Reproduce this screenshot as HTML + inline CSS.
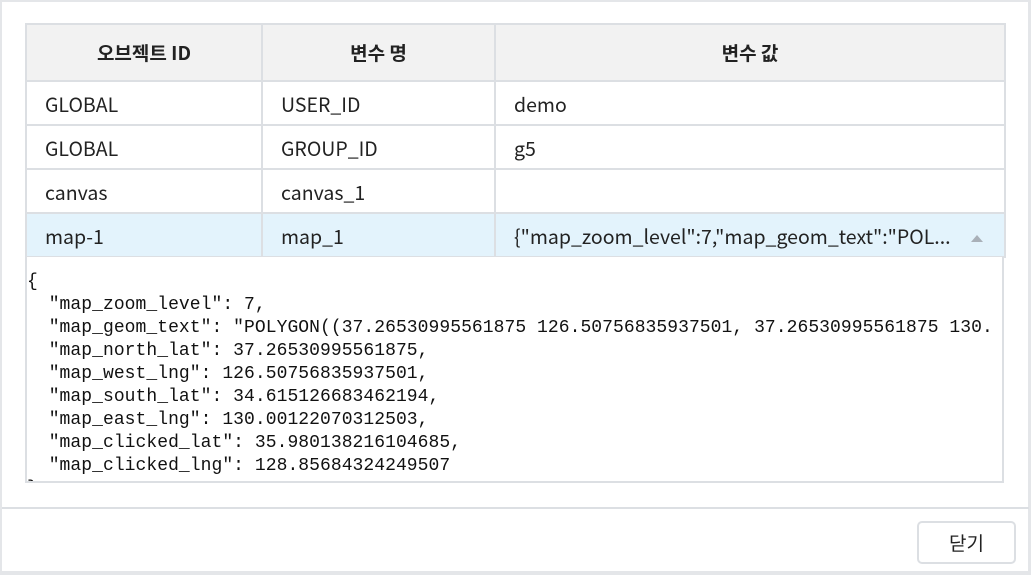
<!DOCTYPE html>
<html><head><meta charset="utf-8"><style>
*{margin:0;padding:0;box-sizing:border-box}
html,body{width:1031px;height:575px;overflow:hidden;background:#e4e6e9}
.panel{position:absolute;left:2px;top:2px;width:1026px;height:569px;background:#fff}
table{position:absolute;left:25px;top:23px;border-collapse:collapse;table-layout:fixed;font-family:"Noto Sans CJK KR","Liberation Sans",sans-serif;font-size:19.5px;color:#222}
td,th{border:2px solid #dcdfe3;padding:0 0 0 18px;text-align:left;font-weight:normal;height:44px;white-space:nowrap;overflow:hidden}
th{background:#f2f2f2;font-weight:bold;text-align:center;padding:0;height:57px;font-size:19px}
tr.sel td{background:#e3f3fc}
.ta{position:absolute;left:25px;top:257px;width:979px;height:226px;border:2px solid #dcdfe3;border-top:none;overflow:hidden;background:#fff}
pre{font-family:"Liberation Mono",monospace;font-size:18px;line-height:23px;color:#111;padding:14px 0 0 0;white-space:pre;letter-spacing:0.05px}
.foot{position:absolute;left:2px;top:507px;width:1027px;height:2px;background:#dcdfe3}
.btn{position:absolute;left:917px;top:521px;width:99px;height:43px;border:2px solid #dcdfe3;border-radius:5px;background:#fff;font-family:"Noto Sans CJK KR",sans-serif;font-size:19px;text-align:center;line-height:39px;color:#222}
.tri{position:absolute;left:971px;top:235px;width:0;height:0;border-left:6px solid transparent;border-right:6px solid transparent;border-bottom:7px solid #a9b0b8}
</style></head><body>
<div class="panel"></div>
<table>
<colgroup><col style="width:236px"><col style="width:233px"><col style="width:510px"></colgroup>
<tr><th>오브젝트 ID</th><th>변수 명</th><th>변수 값</th></tr>
<tr><td>GLOBAL</td><td>USER_ID</td><td>demo</td></tr>
<tr><td>GLOBAL</td><td>GROUP_ID</td><td>g5</td></tr>
<tr><td>canvas</td><td>canvas_1</td><td></td></tr>
<tr class="sel"><td>map-1</td><td>map_1</td><td>{"map_zoom_level":7,"map_geom_text":"POL...</td></tr>
</table>
<div class="tri"></div>
<div class="ta"><pre>{
  "map_zoom_level": 7,
  "map_geom_text": "POLYGON((37.26530995561875 126.50756835937501, 37.26530995561875 130.
  "map_north_lat": 37.26530995561875,
  "map_west_lng": 126.50756835937501,
  "map_south_lat": 34.615126683462194,
  "map_east_lng": 130.00122070312503,
  "map_clicked_lat": 35.980138216104685,
  "map_clicked_lng": 128.85684324249507
}</pre></div>
<div class="foot"></div>
<div class="btn">닫기</div>
</body></html>
